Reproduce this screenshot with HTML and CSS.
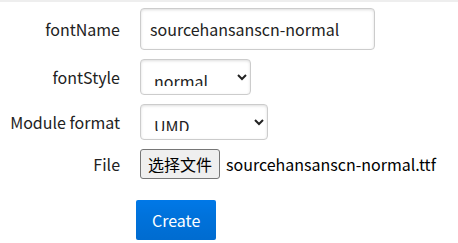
FILE: index.html
```html
<!DOCTYPE html>
<html lang="zh-CN">
<head>
  <meta charset="utf-8">
  <meta name="viewport" content="width=device-width, initial-scale=1">
  <title>Font Converter</title>
  <link rel="stylesheet" href="styles.css">
</head>
<body>
  <form class="form">
    <fieldset>

      <div class="group">
        <label for="fontName">fontName</label>
        <input id="fontName" class="text" type="text" value="sourcehansanscn-normal">
      </div>

      <div class="group">
        <label for="fontStyle">fontStyle</label>
        <select id="fontStyle" class="select style-select">
          <option>normal</option>
          <option>italic</option>
        </select>
      </div>

      <div class="group">
        <label for="format">Module format</label>
        <select id="format" class="select format-select">
          <option>UMD</option>
          <option>ES Module</option>
        </select>
      </div>

      <div class="group">
        <label>File</label>
        <div class="file">
          <button type="button" class="file-btn">选择文件</button>
          <span class="file-name">sourcehansanscn-normal.ttf</span>
        </div>
      </div>

      <div class="controls">
        <button type="button" class="button primary">Create</button>
      </div>

    </fieldset>
  </form>
</body>
</html>
```

FILE: styles.css
```css
:root {
  --text: #222;
  --border: #ccc;
  --primary: rgb(0, 120, 231);
  --font: "Noto Sans CJK SC";
}

body {
  margin: 0;
  border-top: 2px solid #eee;
  background: #fff;
  color: var(--text);
  font: 16px var(--font), sans-serif;
}

fieldset {
  margin: 0;
  padding: 6px 0 0;
  border: 0;
}

.group {
  display: grid;
  grid-template-columns: 120px auto;
  column-gap: 20px;
  align-items: center;
  justify-items: start;
  margin-bottom: 9px;
}

label {
  justify-self: end;
  line-height: normal;
}

.text, .select {
  box-sizing: border-box;
  margin: 0;
  border: 1px solid var(--border);
  border-radius: 4px;
  box-shadow: inset 0 1px 3px #ddd;
  background: #fff;
  color: var(--text);
  font: 16px var(--font), sans-serif;
  line-height: normal;
  outline: 0;
}

.text {
  width: 235px;
  padding: 8px 9px;
}

.select {
  height: 36px;
  padding: 8px 9px;
}

.style-select {width: 111px}
.format-select {width: 128px}

.file {
  display: flex;
  align-items: center;
  gap: 6px;
}

.file-btn {
  box-sizing: border-box;
  height: 30px;
  padding: 0 7px;
  border: 1px solid #767676;
  border-radius: 3px;
  background: #efefef;
  color: #000;
  font: 16px var(--font), sans-serif;
}

.file-name {color: #000}

.controls {
  margin: 21px 0 0 136px;
}

.button {
  padding: 8px 16px;
  border: 0;
  border-radius: 2px;
  color: #fff;
  font: 16px var(--font), sans-serif;
  line-height: normal;
}

.primary {
  background-color: var(--primary);
  background-image: linear-gradient(transparent, rgba(0, 0, 0, .05) 40%, rgba(0, 0, 0, .1));
}
```
